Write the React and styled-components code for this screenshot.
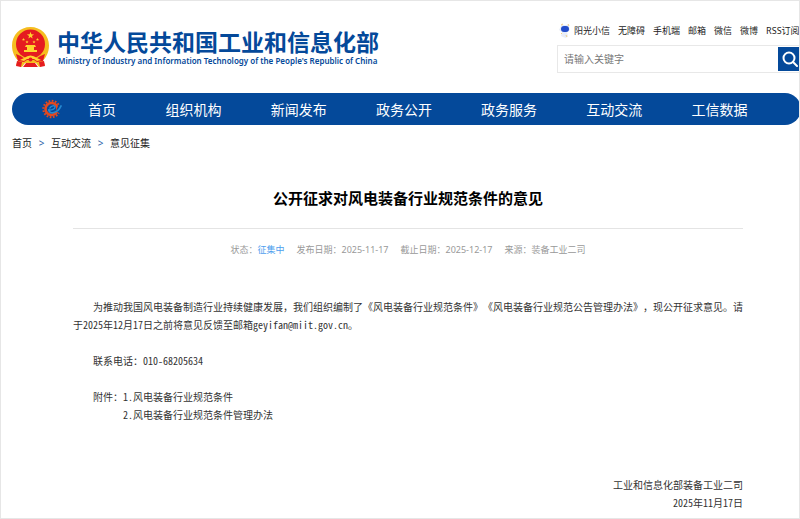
import React from "react";
import styled, { createGlobalStyle } from "styled-components";

const BLUE = "#04499a";

const Global = createGlobalStyle`
  * { box-sizing: border-box; }
  body { margin: 0; background: #fff; overflow: hidden; }
  body, button, input { font-family: "Noto Sans", "Noto Sans CJK SC", sans-serif; }
  a { color: inherit; text-decoration: none; }
  h1, p, ul, ol { margin: 0; padding: 0; font-weight: normal; list-style: none; }
`;

const Page = styled.div`
  min-height: 100vh;
  border: 1px solid #e6e6e6;
  padding-left: 11px;
  overflow: hidden;
  color: #333;
`;

const Header = styled.header`
  display: flex;
  justify-content: space-between;
  height: 92px;
  margin-right: -2px;
`;

const Brand = styled.a`
  display: flex;
  gap: 8px;
  padding-top: 26px;
  color: ${BLUE};
`;

const Emblem = styled.svg`
  width: 37px;
  height: 41px;
`;

const BrandText = styled.div`
  white-space: nowrap;
`;

const BrandName = styled.div`
  font: 700 23px/28px "Noto Sans CJK SC", sans-serif;
`;

const BrandLatin = styled.div`
  padding-left: 1px;
  font: 600 8px/12px "Noto Sans", sans-serif;
`;

const Tools = styled.div`
  width: 244px;
  padding-top: 22px;
`;

const QuickLinks = styled.ul`
  display: flex;
  align-items: center;
  gap: 8px;
  height: 15px;
  padding-left: 2px;
  font-size: 9px;
  white-space: nowrap;
  color: #222;
`;

const QuickLink = styled.li`
  display: flex;
  flex: none;
  align-items: center;
  gap: 3px;
`;

const Mascot = styled.svg`
  width: 12px;
  height: 15px;
`;

const Search = styled.form`
  display: flex;
  align-items: center;
  height: 28px;
  margin-top: 7px;
  border: 1px solid #e8e8e8;
  border-right: 0;
`;

const SearchInput = styled.input`
  flex: 1;
  min-width: 0;
  height: 26px;
  padding: 0 6px;
  border: 0;
  outline: 0;
  font-size: 10px;
  &::placeholder { color: #777; opacity: 1; }
`;

const SearchButton = styled.button`
  display: flex;
  align-items: center;
  justify-content: center;
  width: 23px;
  height: 24px;
  padding: 0;
  border: 0;
  background: ${BLUE};
`;

const Nav = styled.nav`
  display: flex;
  align-items: center;
  height: 32px;
  margin-right: -2px;
  padding: 0 29px 0 30px;
  border-radius: 16px;
  background: ${BLUE};
  color: #fff;
  font: 14px/30px "Noto Sans CJK SC", sans-serif;
`;

const NavHome = styled.a`
  display: flex;
  align-items: center;
  gap: 26px;
  width: 99px;
`;

const NavLinks = styled.ul`
  display: flex;
  flex: 1;
`;

const NavItem = styled.li`
  flex: 1;
  text-align: center;
`;

const Crumbs = styled.ol`
  display: flex;
  gap: 6px;
  margin-top: 9px;
  font-size: 10px;
  line-height: 18px;
  color: #222;
`;

const CrumbArrow = styled.li`
  width: 7px;
  text-align: center;
  color: #2a63a8;
`;

const Article = styled.article`
  margin: 0 56px 0 61px;
`;

const Title = styled.h1`
  padding: 35px 0 19px;
  border-bottom: 1px solid #e4e4e4;
  text-align: center;
  font: 700 15px/22px "Noto Sans CJK SC", sans-serif;
  color: #000;
`;

const Meta = styled.ul`
  display: flex;
  justify-content: center;
  gap: 12px;
  margin-top: 14px;
  font-size: 9px;
  line-height: 14px;
  color: #999;
`;

const Status = styled.span`
  color: #4ea0ee;
`;

const Body = styled.div`
  margin-top: 41px;
  font: 10px/18px "Noto Sans Mono CJK SC", "Noto Sans CJK SC", monospace;
  text-spacing-trim: space-all;
`;

const Paragraph = styled.p`
  margin-bottom: 18px;
  text-indent: 20px;
`;

const Attachments = styled.div`
  display: flex;
  padding-left: 20px;
`;

const Signature = styled.div`
  margin-top: 52px;
  text-align: right;
`;

const quick = ["无障碍", "手机端", "邮箱", "微信", "微博", "RSS订阅"];
const sections = ["组织机构", "新闻发布", "政务公开", "政务服务", "互动交流", "工信数据"];

const STAR = "M0-5 1.2-1.6 4.8-1.5 1.9.6 2.9 4 0 2-2.9 4-1.9.6-4.8-1.5-1.2-1.6Z";

function NationalEmblem() {
  return (
    <Emblem viewBox="0 0 37 41" aria-hidden="true">
      <path d="M18.500 0C8 0 0 8 0 18.500c0 7 3 12 6 15L4 38l6 2 3-4h11l3 4 6-2-2-4.500c3-3 6-8 6-15C37 8 29 0 18.500 0Z" fill="#f5be20" />
      <circle cx="18.500" cy="17" r="14.500" fill="#e51b20" />
      <path d="M4 27q6 2 9 5h11q3-3 9-5l-2 7-6 1-3-2h-7l-3 2-6-1Z" fill="#e51b20" />
      <path d="m5 34 5 1-1 5-5-1Zm27 0-5 1 1 5 5-1Zm-18 2h9l3 4H11Z" fill="#e51b20" />
      <g fill="#ffd42e">
        <path d={STAR} transform="translate(18.500 8.500) scale(.75)" />
        <path d={STAR} transform="translate(11.500 12.500) scale(.33)" />
        <path d={STAR} transform="translate(25.500 12.500) scale(.33)" />
        <path d={STAR} transform="translate(15 15) scale(.33)" />
        <path d={STAR} transform="translate(22 15) scale(.33)" />
        <path d="M14 18h9l1 2H13Zm1 2h7v3h-7Zm-3 3h13v2H12Z" />
        <path d="M12 31q6.500-5 13 0l4 2-4 1-3-2h-7l-3 2-4-1Z" />
      </g>
      <circle cx="18.500" cy="32.500" r="2" fill="#e51b20" />
    </Emblem>
  );
}

function GearMark() {
  return (
    <svg width="20" height="20" viewBox="0 0 20 20" fill="none" aria-hidden="true">
      <circle cx="9.500" cy="10" r="8.200" stroke="#e4491f" strokeWidth="2" strokeDasharray="1.700 1.520" />
      <circle cx="9.500" cy="10" r="6" stroke="#e4491f" strokeWidth="2.600" />
      <path d="M14 12 20 16V6l-4 1Z" fill={BLUE} />
      <path d="M6 11c4 .6 7-1 7-3 0-2-4-1.500-5.500 1.500" stroke="#2689d0" strokeWidth="1.400" />
      <path d="M7 11c0 5 9 3 12-4" stroke="#2689d0" strokeWidth="1.800" strokeLinecap="round" />
    </svg>
  );
}

export default function App() {
  return (
    <>
      <Global />
      <Page>
        <Header>
          <Brand href="#">
            <NationalEmblem />
            <BrandText>
              <BrandName>中华人民共和国工业和信息化部</BrandName>
              <BrandLatin>Ministry of Industry and Information Technology of the People's Republic of China</BrandLatin>
            </BrandText>
          </Brand>
          <Tools>
            <QuickLinks>
              <QuickLink>
                <Mascot viewBox="0 0 12 15" aria-hidden="true">
                  <path d="M2 3 3 1l2 1h3l2-1v3l1 3-3 2 1 4-2 2-3-1-2-1 1-4-3-2Z" fill="#e8edf8" />
                  <path d="m2 2 2-1M9 1l1 2M7 12l1 2M3 10l-1 1" stroke="#f3cf83" />
                  <rect x="2" y="3" width="8" height="6" rx="3" fill="#234dcb" />
                </Mascot>
                <a href="#">阳光小信</a>
              </QuickLink>
              {quick.map((t) => (
                <QuickLink key={t}><a href="#">{t}</a></QuickLink>
              ))}
            </QuickLinks>
            <Search onSubmit={(e) => e.preventDefault()}>
              <SearchInput aria-label="请输入关键字" placeholder="请输入关键字" />
              <SearchButton aria-label="搜索">
                <svg width="16" height="16" viewBox="0 0 16 16" fill="none" stroke="#fff" strokeWidth="2" aria-hidden="true">
                  <circle cx="7" cy="7" r="5.500" />
                  <path d="m11 11 4 4" strokeLinecap="round" />
                </svg>
              </SearchButton>
            </Search>
          </Tools>
        </Header>
        <Nav>
          <NavHome href="#"><GearMark />首页</NavHome>
          <NavLinks>
            {sections.map((t) => (
              <NavItem key={t}><a href="#">{t}</a></NavItem>
            ))}
          </NavLinks>
        </Nav>
        <Crumbs>
          <li><a href="#">首页</a></li>
          <CrumbArrow>&gt;</CrumbArrow>
          <li><a href="#">互动交流</a></li>
          <CrumbArrow>&gt;</CrumbArrow>
          <li><a href="#">意见征集</a></li>
        </Crumbs>
        <Article>
          <Title>公开征求对风电装备行业规范条件的意见</Title>
          <Meta>
            <li>状态：<Status>征集中</Status></li>
            <li>发布日期：2025-11-17</li>
            <li>截止日期：2025-12-17</li>
            <li>来源：装备工业二司</li>
          </Meta>
          <Body>
            <Paragraph>为推动我国风电装备制造行业持续健康发展，我们组织编制了《风电装备行业规范条件》《风电装备行业规范公告管理办法》，现公开征求意见。请于2025年12月17日之前将意见反馈至邮箱geyifan@miit.gov.cn。</Paragraph>
            <Paragraph>联系电话：010-68205634</Paragraph>
            <Attachments>
              <span>附件：</span>
              <ul>
                <li><a href="#">1.风电装备行业规范条件</a></li>
                <li><a href="#">2.风电装备行业规范条件管理办法</a></li>
              </ul>
            </Attachments>
            <Signature>
              <p>工业和信息化部装备工业二司</p>
              <p>2025年11月17日</p>
            </Signature>
          </Body>
        </Article>
      </Page>
    </>
  );
}
